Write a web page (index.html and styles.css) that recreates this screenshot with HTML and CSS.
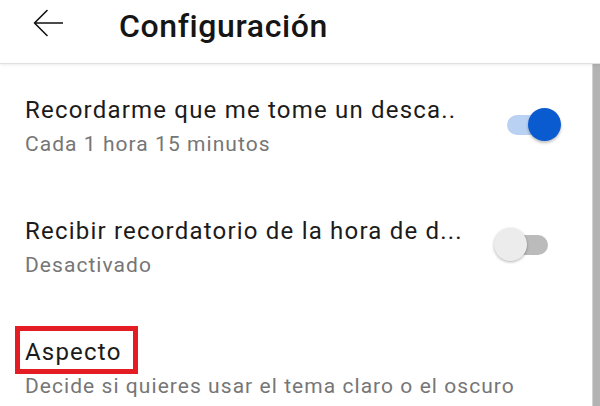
FILE: index.html
```html
<!DOCTYPE html>
<html lang="es">
<head>
<meta charset="utf-8">
<title>Configuración</title>
<link rel="stylesheet" href="styles.css">
</head>
<body>
<div class="screen">
  <header class="appbar">
    <svg class="back" viewBox="0 0 30 28" width="30" height="28" aria-hidden="true">
      <path d="M14 1.5 L1.5 14 L14 26.5 M1.5 14 H29.5" fill="none" stroke="#111" stroke-width="1.6" stroke-linecap="round" stroke-linejoin="round"/>
    </svg>
    <h1 class="appbar-title">Configuración</h1>
  </header>
  <main class="content">
    <div class="list">
      <div class="row">
        <div class="row-text">
          <div class="row-title">Recordarme que me tome un desca..</div>
          <div class="row-sub">Cada 1 hora 15 minutos</div>
        </div>
        <div class="switch switch-on"><span class="track"></span><span class="thumb"></span></div>
      </div>
      <div class="row">
        <div class="row-text">
          <div class="row-title">Recibir recordatorio de la hora de d...</div>
          <div class="row-sub">Desactivado</div>
        </div>
        <div class="switch switch-off"><span class="track"></span><span class="thumb"></span></div>
      </div>
      <div class="row">
        <div class="row-text">
          <div class="row-title"><span class="highlight">Aspecto</span></div>
          <div class="row-sub">Decide si quieres usar el tema claro o el oscuro</div>
        </div>
      </div>
    </div>
    <div class="scrollbar"></div>
  </main>
</div>
</body>
</html>
```

FILE: styles.css
```css
html, body {
  margin: 0;
  padding: 0;
  background: #ffffff;
}

body {
  font-family: Roboto, "Noto Sans", "Liberation Sans", sans-serif;
  color: #1b1b1b;
  width: 600px;
  height: 406px;
  overflow: hidden;
}

.screen {
  display: flex;
  flex-direction: column;
  height: 406px;
}

.appbar {
  position: relative;
  z-index: 2;
  box-sizing: border-box;
  height: 64px;
  display: flex;
  align-items: flex-start;
  padding: 6px 0 0 33px;
  background: #ffffff;
  border-bottom: 1px solid #e0e0e0;
  box-shadow: 0 1px 3px rgba(0, 0, 0, 0.08);
}

.back {
  display: block;
  margin-top: 3px;
  flex: none;
}

.appbar-title {
  margin: 0 0 0 56px;
  font-size: 32px;
  line-height: 40px;
  font-weight: 500;
  letter-spacing: 0.6px;
  color: #151515;
}

.content {
  flex: 1;
  display: flex;
  min-height: 0;
  overflow: hidden;
}

.list {
  flex: 1;
  display: flex;
  flex-direction: column;
  gap: 61px;
  padding: 32px 0 0 25px;
}

.row {
  display: flex;
  align-items: flex-start;
}

.row-text {
  flex: 1;
  min-width: 0;
}

.row-title {
  font-size: 24px;
  line-height: 28px;
  letter-spacing: 1.2px;
  color: #1b1b1b;
  white-space: nowrap;
}

.row-sub {
  margin-top: 8px;
  font-size: 21px;
  line-height: 24px;
  letter-spacing: 1.05px;
  color: #767676;
  white-space: nowrap;
}

.highlight {
  position: relative;
  display: inline-block;
}

.highlight::after {
  content: "";
  position: absolute;
  left: -10px;
  top: -12px;
  width: 123px;
  height: 48px;
  box-sizing: border-box;
  border: 5px solid #e41d25;
}

.switch {
  position: relative;
  flex: none;
  width: 54px;
  height: 33px;
  margin-top: 12px;
}

.switch .track {
  position: absolute;
  top: 6.5px;
  height: 20px;
  border-radius: 10px;
}

.switch .thumb {
  position: absolute;
  top: 0;
  width: 33px;
  height: 33px;
  border-radius: 50%;
}

.switch-on {
  margin-right: 31px;
}

.switch-on .track {
  left: 0;
  width: 46px;
  background: #b9d1f3;
}

.switch-on .thumb {
  right: 0;
  background: #0b5bd0;
  box-shadow: 0 2px 3px rgba(0, 0, 0, 0.25);
}

.switch-off {
  margin-right: 44px;
  margin-top: 11px;
}

.switch-off .track {
  right: 0;
  width: 46px;
  background: #bbbbbb;
}

.switch-off .thumb {
  left: 0;
  background: #ececec;
  box-shadow: 0 1px 3px rgba(0, 0, 0, 0.3);
}

.scrollbar {
  flex: none;
  width: 7px;
  background: #b3b3b3;
  border-left: 1px solid #d2d2d2;
}
```
